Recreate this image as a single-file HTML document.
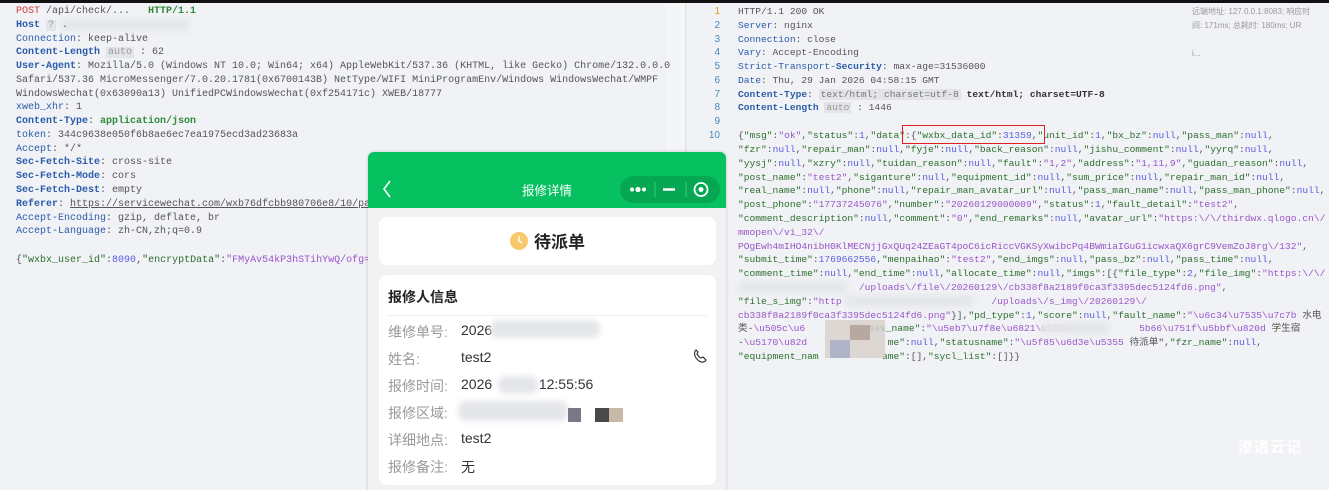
<!DOCTYPE html>
<html><head><meta charset="utf-8">
<style>
*{margin:0;padding:0;box-sizing:border-box}
html,body{width:1329px;height:490px;overflow:hidden}
body{background:#eef0f3;position:relative;font-family:"Liberation Mono","Noto Sans CJK SC",monospace}
.topbar{position:absolute;left:0;top:0;width:1329px;height:3px;background:#111}
.lp{position:absolute;left:0;top:3px;width:666px;height:487px;background:#f0f2f5}
.gut{position:absolute;left:666px;top:3px;width:20px;height:487px;background:#f4f5f7;border-right:1px solid #dfe1e5}
.rp{position:absolute;left:687px;top:3px;width:642px;height:487px;background:#f0f2f5}
.l{position:absolute;white-space:pre;font-size:10px;line-height:13px;color:#555}
.L{left:16px}
.R{left:738px;font-size:9.6px}
.n{position:absolute;left:700px;width:20px;text-align:right;font-size:10px;line-height:13px;color:#4a8ab8;font-family:"Liberation Sans",sans-serif}
.k{color:#2b5cab;font-weight:bold}
.kn{color:#2b5cab}
.g{color:#2f8a3a;font-weight:bold}
.r{color:#d03a3a}
.s{color:#9a55c8}
.nu{color:#5a5ee0}
.jk{color:#2d6e2d}
.badge{background:#e2e4e8;color:#999;padding:0 2px}
.blur{position:absolute;background:#e4e6ea;border-radius:8px;filter:blur(3px)}
.ph{position:absolute;left:368px;top:152px;width:358px;height:338px;background:#f2f2f2;border-radius:6px 6px 0 0;overflow:hidden;box-shadow:0 0 3px rgba(0,0,0,.2);font-family:"Liberation Sans","Noto Sans CJK SC",sans-serif}
.hd{position:absolute;left:0;top:0;width:358px;height:56px;background:#07c160;color:#fff}
.card{position:absolute;left:11px;background:#fff;border-radius:8px;width:337px}
.row{position:absolute;left:20px;font-size:14px;color:#999;width:320px;height:20px;white-space:nowrap}
.row b{font-weight:normal;color:#333;position:absolute;left:73px;top:0;white-space:nowrap}
</style></head><body>
<div class="topbar"></div>
<div class="lp"></div><div class="gut"></div><div class="rp"></div>

<div class="l L" style="top:5px"><span class="r">POST</span> /api/check/...   <span class="g">HTTP/1.1</span></div>
<div class="blur" style="left:60px;top:19px;width:130px;height:12px"></div>
<div class="l L" style="top:19px"><span class="k">Host</span> <span class="badge">?</span> .</div>
<div class="l L" style="top:33px"><span class="kn">Connection</span>: keep-alive</div>
<div class="l L" style="top:46px"><span class="k">Content-Length</span> <span class="badge">auto</span> : 62</div>
<div class="l L" style="top:60px"><span class="k">User-Agent</span>: Mozilla/5.0 (Windows NT 10.0; Win64; x64) AppleWebKit/537.36 (KHTML, like Gecko) Chrome/132.0.0.0</div>
<div class="l L" style="top:74px">Safari/537.36 MicroMessenger/7.0.20.1781(0x6700143B) NetType/WIFI MiniProgramEnv/Windows WindowsWechat/WMPF</div>
<div class="l L" style="top:88px">WindowsWechat(0x63090a13) UnifiedPCWindowsWechat(0xf254171c) XWEB/18777</div>
<div class="l L" style="top:101px"><span class="kn">xweb_xhr</span>: 1</div>
<div class="l L" style="top:115px"><span class="k">Content-Type</span>: <span class="g">application/json</span></div>
<div class="l L" style="top:129px"><span class="kn">token</span>: 344c9638e050f6b8ae6ec7ea1975ecd3ad23683a</div>
<div class="l L" style="top:143px"><span class="kn">Accept</span>: */*</div>
<div class="l L" style="top:156px"><span class="k">Sec-Fetch-Site</span>: cross-site</div>
<div class="l L" style="top:170px"><span class="k">Sec-Fetch-Mode</span>: cors</div>
<div class="l L" style="top:184px"><span class="k">Sec-Fetch-Dest</span>: empty</div>
<div class="l L" style="top:198px"><span class="k">Referer</span>: <u>https://servicewechat.com/wxb76dfcbb980706e8/10/page-frame.html</u></div>
<div class="l L" style="top:212px"><span class="kn">Accept-Encoding</span>: gzip, deflate, br</div>
<div class="l L" style="top:225px"><span class="kn">Accept-Language</span>: zh-CN,zh;q=0.9</div>
<div class="l L" style="top:254px">{<span class="jk">"wxbx_user_id"</span>:<span class="nu">8090</span>,<span class="jk">"encryptData"</span>:<span class="s">"FMyAv54kP3hSTihYwQ/ofg=="</span>}</div>

<div class="n" style="top:5px;color:#e0a020">1</div><div class="n" style="top:19px">2</div><div class="n" style="top:33px">3</div><div class="n" style="top:46px">4</div><div class="n" style="top:60px">5</div><div class="n" style="top:74px">6</div><div class="n" style="top:88px">7</div><div class="n" style="top:101px">8</div><div class="n" style="top:115px">9</div><div class="n" style="top:129px">10</div>
<div class="l R" style="top:5px">HTTP/1.1 200 OK</div>
<div class="l R" style="top:19px"><span class="kn">Server</span>: nginx</div>
<div class="l R" style="top:33px"><span class="kn">Connection</span>: close</div>
<div class="l R" style="top:46px"><span class="kn">Vary</span>: Accept-Encoding</div>
<div class="l R" style="top:60px"><span class="kn">Strict-Transport-</span><span class="k">Security</span>: max-age=31536000</div>
<div class="l R" style="top:74px"><span class="kn">Date</span>: Thu, 29 Jan 2026 04:58:15 GMT</div>
<div class="l R" style="top:88px"><span class="k">Content-Type</span>: <span class="badge" style="color:#777">text/html; charset=utf-8</span> <b style="color:#333">text/html; charset=UTF-8</b></div>
<div class="l R" style="top:101px"><span class="k">Content-Length</span> <span class="badge">auto</span> : 1446</div>
<div style="position:absolute;left:1192px;top:5px;font:8px 'Liberation Sans','Noto Sans CJK SC',sans-serif;color:#999;line-height:14px;white-space:nowrap">远端地址: 127.0.0.1:8083; 响应时<br>间: 171ms; 总耗时: 180ms; UR<br><br>i...</div>

<div class="l R" style="top:129px">{<span class="jk">"msg"</span>:<span class="s">"ok"</span>,<span class="jk">"status"</span>:<span class="nu">1</span>,<span class="jk">"data"</span>:{<span class="jk">"wxbx_data_id"</span>:<span class="nu">31359</span>,<span class="jk">"unit_id"</span>:<span class="nu">1</span>,<span class="jk">"bx_bz"</span>:<span class="nu">null</span>,<span class="jk">"pass_man"</span>:<span class="nu">null</span>,</div>
<div style="position:absolute;left:902px;top:125px;width:143px;height:19px;border:1.5px solid #e02020"></div>
<div class="l R" style="top:143px"><span class="jk">"fzr"</span>:<span class="nu">null</span>,<span class="jk">"repair_man"</span>:<span class="nu">null</span>,<span class="jk">"fyje"</span>:<span class="nu">null</span>,<span class="jk">"back_reason"</span>:<span class="nu">null</span>,<span class="jk">"jishu_comment"</span>:<span class="nu">null</span>,<span class="jk">"yyrq"</span>:<span class="nu">null</span>,</div>
<div class="l R" style="top:157px"><span class="jk">"yysj"</span>:<span class="nu">null</span>,<span class="jk">"xzry"</span>:<span class="nu">null</span>,<span class="jk">"tuidan_reason"</span>:<span class="nu">null</span>,<span class="jk">"fault"</span>:<span class="s">"1,2"</span>,<span class="jk">"address"</span>:<span class="s">"1,11,9"</span>,<span class="jk">"guadan_reason"</span>:<span class="nu">null</span>,</div>
<div class="l R" style="top:171px"><span class="jk">"post_name"</span>:<span class="s">"test2"</span>,<span class="jk">"siganture"</span>:<span class="nu">null</span>,<span class="jk">"equipment_id"</span>:<span class="nu">null</span>,<span class="jk">"sum_price"</span>:<span class="nu">null</span>,<span class="jk">"repair_man_id"</span>:<span class="nu">null</span>,</div>
<div class="l R" style="top:184px"><span class="jk">"real_name"</span>:<span class="nu">null</span>,<span class="jk">"phone"</span>:<span class="nu">null</span>,<span class="jk">"repair_man_avatar_url"</span>:<span class="nu">null</span>,<span class="jk">"pass_man_name"</span>:<span class="nu">null</span>,<span class="jk">"pass_man_phone"</span>:<span class="nu">null</span>,</div>
<div class="l R" style="top:198px"><span class="jk">"post_phone"</span>:<span class="s">"17737245076"</span>,<span class="jk">"number"</span>:<span class="s">"20260129000009"</span>,<span class="jk">"status"</span>:<span class="nu">1</span>,<span class="jk">"fault_detail"</span>:<span class="s">"test2"</span>,</div>
<div class="l R" style="top:212px"><span class="jk">"comment_description"</span>:<span class="nu">null</span>,<span class="jk">"comment"</span>:<span class="s">"0"</span>,<span class="jk">"end_remarks"</span>:<span class="nu">null</span>,<span class="jk">"avatar_url"</span>:<span class="s">"https:\/\/thirdwx.qlogo.cn\/</span></div>
<div class="l R" style="top:226px"><span class="s">mmopen\/vi_32\/</span></div>
<div class="l R" style="top:240px"><span class="s">POgEwh4mIHO4nibH0KlMECNjjGxQUq24ZEaGT4poC6icRiccVGKSyXwibcPq4BWmiaIGuG1icwxaQX6grC9VemZoJ8rg\/132"</span>,</div>
<div class="l R" style="top:253px"><span class="jk">"submit_time"</span>:<span class="nu">1769662556</span>,<span class="jk">"menpaihao"</span>:<span class="s">"test2"</span>,<span class="jk">"end_imgs"</span>:<span class="nu">null</span>,<span class="jk">"pass_bz"</span>:<span class="nu">null</span>,<span class="jk">"pass_time"</span>:<span class="nu">null</span>,</div>
<div class="l R" style="top:267px"><span class="jk">"comment_time"</span>:<span class="nu">null</span>,<span class="jk">"end_time"</span>:<span class="nu">null</span>,<span class="jk">"allocate_time"</span>:<span class="nu">null</span>,<span class="jk">"imgs"</span>:[{<span class="jk">"file_type"</span>:<span class="nu">2</span>,<span class="jk">"file_img"</span>:<span class="s">"https:\/\/</span></div>
<div class="l R" style="top:281px"><span class="s">                     /uploads\/file\/20260129\/cb338f8a2189f0ca3f3395dec5124fd6.png"</span>,</div>
<div class="l R" style="top:295px"><span class="jk">"file_s_img"</span>:<span class="s">"http                          /uploads\/s_img\/20260129\/</span></div>
<div class="l R" style="top:309px"><span class="s">cb338f8a2189f0ca3f3395dec5124fd6.png"</span>}],<span class="jk">"pd_type"</span>:<span class="nu">1</span>,<span class="jk">"score"</span>:<span class="nu">null</span>,<span class="jk">"fault_name"</span>:<span class="s">"\u6c34\u7535\u7c7b</span> 水电</div>
<div class="l R" style="top:322px">类-<span class="s">\u505c\u6</span>        <span class="jk">ddress_name"</span>:<span class="s">"\u5eb7\u7f8e\u6821\u533a            5b66\u751f\u5bbf\u820d</span> 学生宿</div>
<div class="l R" style="top:336px">-<span class="s">\u5170\u82d</span>              <span class="jk">me"</span>:<span class="nu">null</span>,<span class="jk">"statusname"</span>:<span class="s">"\u5f85\u6d3e\u5355</span> 待派单",<span class="jk">"fzr_name"</span>:<span class="nu">null</span>,</div>
<div class="l R" style="top:350px"><span class="jk">"equipment_nam</span>           <span class="jk">ame"</span>:[],<span class="jk">"sycl_list"</span>:[]}}</div>
<div class="blur" style="left:738px;top:281px;width:110px;height:12px"></div>
<div class="blur" style="left:845px;top:295px;width:130px;height:12px"></div>
<div class="blur" style="left:1040px;top:322px;width:70px;height:12px"></div>
<div style="position:absolute;left:825px;top:320px;width:60px;height:38px;background:#d8d0cc;opacity:.8"></div>
<div style="position:absolute;left:830px;top:340px;width:20px;height:18px;background:#b0b4c8"></div>
<div style="position:absolute;left:850px;top:325px;width:20px;height:15px;background:#b8a8a0"></div>
<div style="position:absolute;left:1238px;top:436px;font:bold 15px 'Noto Sans CJK SC',sans-serif;color:#fff;letter-spacing:1px">渗透云记</div>

<div class="ph">
  <div class="hd">
    <svg style="position:absolute;left:14px;top:28px" width="10" height="18"><path d="M8 1 L2 9 L8 17" stroke="#fff" stroke-width="1.6" fill="none"/></svg>
    <div style="position:absolute;left:0;width:358px;top:28px;text-align:center;font-size:12.5px">报修详情</div>
    <div style="position:absolute;left:252px;top:24px;width:100px;height:27px;border-radius:14px;background:#06a752"></div>
    <svg style="position:absolute;left:252px;top:24px" width="100" height="27">
      <circle cx="12" cy="13.5" r="2" fill="#fff"/><circle cx="18" cy="13.5" r="2.6" fill="#fff"/><circle cx="24" cy="13.5" r="2" fill="#fff"/>
      <line x1="35" y1="6" x2="35" y2="21" stroke="#3cc97a" stroke-width="1"/>
      <line x1="43" y1="13.5" x2="55" y2="13.5" stroke="#fff" stroke-width="2.5"/>
      <line x1="66" y1="6" x2="66" y2="21" stroke="#3cc97a" stroke-width="1"/>
      <circle cx="81" cy="13.5" r="6.5" stroke="#fff" stroke-width="1.8" fill="none"/><circle cx="81" cy="13.5" r="2.5" fill="#fff"/>
    </svg>
  </div>
  <div class="card" style="top:65px;height:48px">
    <svg style="position:absolute;left:130px;top:14px" width="20" height="20"><circle cx="10" cy="10" r="9" fill="#f8c86a"/><path d="M10 5 V10 L13 12" stroke="#fff" stroke-width="1.4" fill="none"/></svg>
    <div style="position:absolute;left:155px;top:11px;font-size:17px;font-weight:bold;color:#222">待派单</div>
  </div>
  <div class="card" style="top:123px;height:210px">
    <div style="position:absolute;left:9px;top:12px;font-size:14px;font-weight:bold;color:#222">报修人信息</div>
    <div style="position:absolute;left:9px;right:9px;top:40px;border-top:1px solid #eee"></div>
  </div>
  <div class="row" style="top:170px">维修单号:<b>2026</b></div>
  <div class="blur" style="position:absolute;left:122px;top:168px;width:110px;height:18px"></div>
  <div class="row" style="top:197px">姓名:<b>test2</b></div>
  <svg style="position:absolute;left:324px;top:196px" width="16" height="16"><path d="M4 2 C1 5 3 10 7 13 C10 15 13 14 14 12 L11 9 L9 10 C7 9 6 8 5 6 L6 4 Z" stroke="#333" stroke-width="1.2" fill="none"/></svg>
  <div class="row" style="top:224px">报修时间:<b>2026&nbsp;&nbsp;&nbsp;&nbsp;&nbsp;&nbsp;&nbsp;&nbsp;&nbsp;&nbsp;&nbsp;&nbsp;12:55:56</b></div>
  <div class="blur" style="position:absolute;left:130px;top:224px;width:40px;height:18px"></div>
  <div class="row" style="top:251px">报修区域:</div>
  <div class="blur" style="position:absolute;left:90px;top:249px;width:110px;height:20px"></div>
  <div style="position:absolute;left:200px;top:256px;width:13px;height:14px;background:#7a7888"></div>
  <div style="position:absolute;left:227px;top:256px;width:14px;height:14px;background:#4a4848"></div>
  <div style="position:absolute;left:241px;top:256px;width:14px;height:14px;background:#c8b8a8"></div>
  <div class="row" style="top:278px">详细地点:<b>test2</b></div>
  <div class="row" style="top:305px">报修备注:<b>无</b></div>
</div>
</body></html>
